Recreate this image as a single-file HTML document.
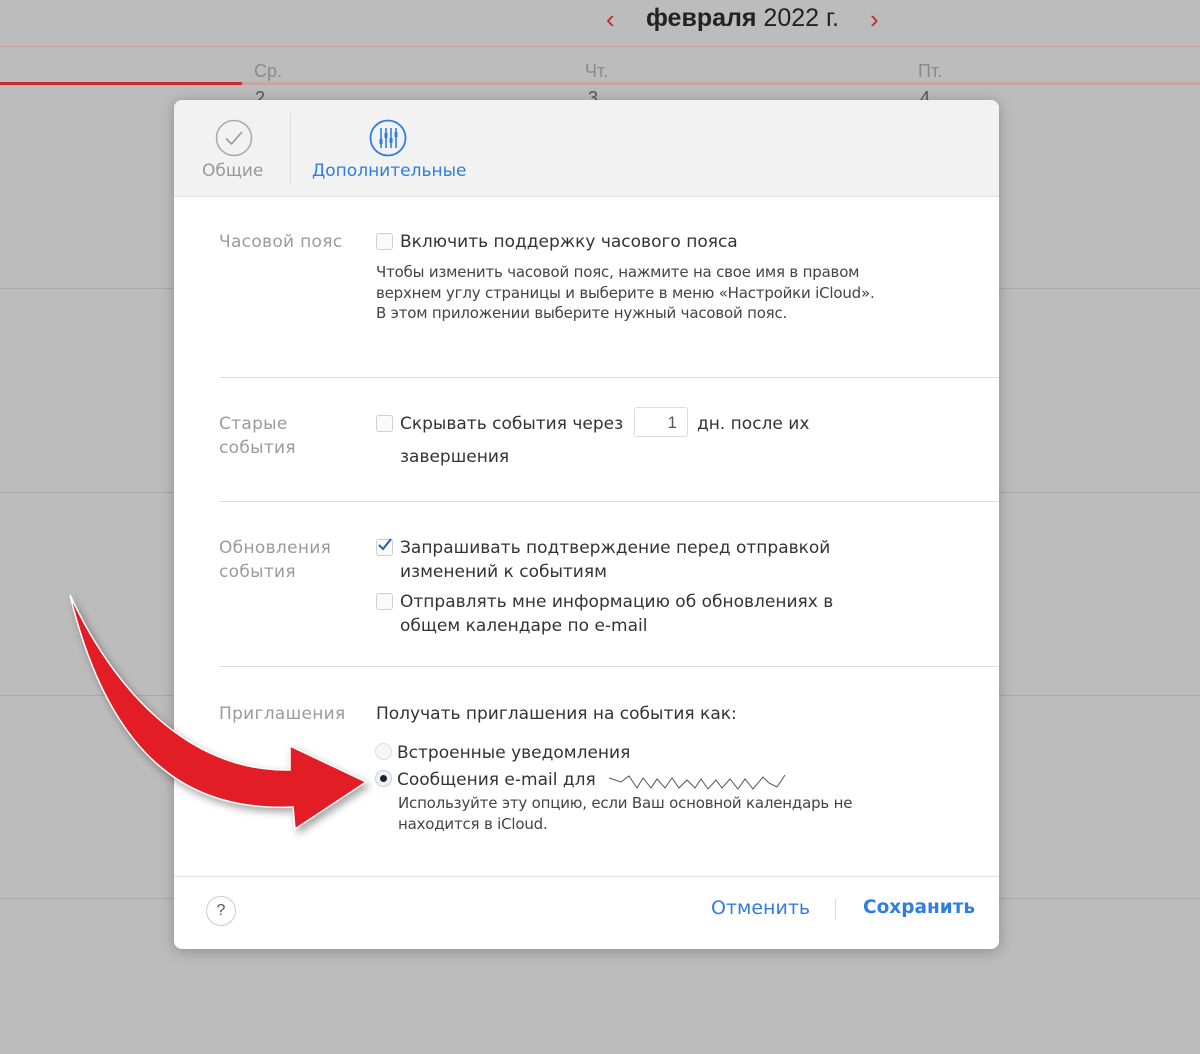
<!DOCTYPE html>
<html><head><meta charset="utf-8"><style>
body{margin:0;width:1200px;height:1054px;background:#bcbcbc;position:relative;overflow:hidden;font-family:"Liberation Sans","DejaVu Sans",sans-serif}
.a{position:absolute;white-space:nowrap}
.d{font-family:"DejaVu Sans",sans-serif}
.hl{position:absolute;left:0;width:1200px;height:1px;background:#a9a9a9}
.modal{position:absolute;left:174px;top:100px;width:825px;height:849px;background:#fff;border-radius:8px;box-shadow:0 2px 14px rgba(0,0,0,.25);overflow:hidden}
.lab{color:#9a9a9a;font-size:17px;line-height:24px;font-family:"DejaVu Sans",sans-serif;letter-spacing:0.3px}
.t{color:#333;font-size:17px;line-height:24px;font-family:"DejaVu Sans",sans-serif;letter-spacing:0px}
.s{color:#444;font-size:15px;line-height:20.5px;font-family:"DejaVu Sans",sans-serif;letter-spacing:-0.2px}
.cb{position:absolute;width:15px;height:15px;border:1px solid #cfcfcf;border-radius:3px;background:#fafafa}
.sep{position:absolute;left:45px;right:0;height:1px;background:#dcdcdc}
</style></head><body>
<div class="a" style="left:606px;top:4px;color:#c8282a;font-size:26px">‹</div>
<div class="a" style="left:646px;top:4px;font-size:25px;color:#222"><b>февраля</b> 2022 г.</div>
<div class="a" style="left:870px;top:4px;color:#c8282a;font-size:26px">›</div>
<div class="hl" style="top:46px;background:#c99a9a"></div>
<div class="a" style="left:254px;top:61px;font-size:18px;color:#8a8a8a">Ср.</div>
<div class="a" style="left:585px;top:61px;font-size:18px;color:#8a8a8a">Чт.</div>
<div class="a" style="left:918px;top:61px;font-size:18px;color:#8a8a8a">Пт.</div>
<div class="hl" style="top:82px;height:3px;background:#c9a3a3"></div>
<div class="a" style="left:0;top:82px;width:242px;height:3px;background:#cc2a2c"></div>
<div class="a" style="left:255px;top:88px;font-size:18px;color:#555">2</div>
<div class="a" style="left:588px;top:88px;font-size:18px;color:#555">3</div>
<div class="a" style="left:920px;top:88px;font-size:18px;color:#555">4</div>
<div class="hl" style="top:288px"></div><div class="hl" style="top:492px"></div><div class="hl" style="top:695px"></div><div class="hl" style="top:898px"></div>

<div class="modal">
 <div style="position:absolute;left:0;top:0;width:825px;height:96px;background:#f2f2f2;border-bottom:1px solid #e0e0e0"></div>
 <svg class="a" style="left:41px;top:19px" width="38" height="38"><circle cx="19" cy="19" r="17.5" fill="none" stroke="#a8a8a8" stroke-width="1.5"/><path d="M11 19.5l5.5 5.5L27 13" fill="none" stroke="#999" stroke-width="1.6"/></svg>
 <div class="a d" style="left:28px;top:61px;font-size:17px;color:#999">Общие</div>
 <div class="a" style="left:116px;top:14px;width:1px;height:70px;background:#ddd"></div>
 <svg class="a" style="left:195px;top:19px" width="38" height="38"><circle cx="19" cy="19" r="17.5" fill="none" stroke="#2f7de1" stroke-width="1.8"/><g stroke="#2f7de1" stroke-width="1.6"><path d="M12 9v20M17 9v20M22 9v20M27 9v20"/></g><g fill="#2f7de1"><rect x="10.5" y="20" width="3" height="5"/><rect x="15.5" y="14" width="3" height="5"/><rect x="20.5" y="19" width="3" height="5"/><rect x="25.5" y="13" width="3" height="5"/></g></svg>
 <div class="a d" style="left:138px;top:61px;font-size:17px;color:#2f7de1">Дополнительные</div>

 <div class="a lab" style="left:45px;top:130px">Часовой пояс</div>
 <div class="cb" style="left:202px;top:133px"></div>
 <div class="a t" style="left:226px;top:130px">Включить поддержку часового пояса</div>
 <div class="a s" style="left:202px;top:162px">Чтобы изменить часовой пояс, нажмите на свое имя в правом<br>верхнем углу страницы и выберите в меню «Настройки iCloud».<br>В этом приложении выберите нужный часовой пояс.</div>
 <div class="sep" style="top:277px"></div>

 <div class="a lab" style="left:45px;top:312px">Старые<br>события</div>
 <div class="cb" style="left:202px;top:315px"></div>
 <div class="a t" style="left:226px;top:312px">Скрывать события через</div>
 <div class="a" style="left:460px;top:307px;width:54px;height:30px;border:1px solid #ddd;border-radius:3px;font-size:17px;color:#555;text-align:right;line-height:30px;box-sizing:border-box;padding-right:10px">1</div>
 <div class="a t" style="left:523px;top:312px">дн. после их</div>
 <div class="a t" style="left:226px;top:345px">завершения</div>
 <div class="sep" style="top:401px"></div>

 <div class="a lab" style="left:45px;top:436px">Обновления<br>события</div>
 <div class="cb" style="left:202px;top:439px"></div>
 <svg class="a" style="left:203px;top:437px" width="16" height="16"><path d="M2 8l4 4 8-10" fill="none" stroke="#1f5fb8" stroke-width="2"/></svg>
 <div class="a t" style="left:226px;top:436px">Запрашивать подтверждение перед отправкой<br>изменений к событиям</div>
 <div class="cb" style="left:202px;top:493px"></div>
 <div class="a t" style="left:226px;top:490px">Отправлять мне информацию об обновлениях в<br>общем календаре по e-mail</div>
 <div class="sep" style="top:566px"></div>

 <div class="a lab" style="left:45px;top:602px">Приглашения</div>
 <div class="a t" style="left:202px;top:602px">Получать приглашения на события как:</div>
 <div class="a" style="left:201px;top:643px;width:15px;height:15px;border:1px solid #ddd;border-radius:50%;background:#f7f7f7"></div>
 <div class="a t" style="left:223px;top:641px">Встроенные уведомления</div>
 <div class="a" style="left:201px;top:670px;width:15px;height:15px;border:1px solid #bcd0ec;border-radius:50%;background:#eef3fa"></div>
 <div class="a" style="left:206px;top:675px;width:7px;height:7px;border-radius:50%;background:#222"></div>
 <div class="a t" style="left:223px;top:668px">Сообщения e-mail для</div>
 <svg class="a" style="left:430px;top:670px" width="210" height="20"><path d="M5 8l12 4 8-6 8 12 6-10 8 10 6-9 8 9 7-10 7 10 8-8 8 8 6-9 7 10 8-9 6 8 8-9 8 10 7-10 8 10 10-12 6 6 8 4 8-12" fill="none" stroke="#555" stroke-width="1"/></svg>
 <div class="a s" style="left:224px;top:693px">Используйте эту опцию, если Ваш основной календарь не<br>находится в iCloud.</div>

 <div class="a" style="left:0;top:776px;width:825px;height:1px;background:#e2e2e2"></div>
 <div class="a" style="left:32px;top:796px;width:28px;height:28px;border:1px solid #ccc;border-radius:50%;text-align:center;line-height:28px;font-size:16px;color:#555">?</div>
 <div class="a d" style="left:537px;top:797px;font-size:19px;color:#2f7de1">Отменить</div>
 <div class="a" style="left:661px;top:798px;width:1px;height:22px;background:#ddd"></div>
 <div class="a d" style="left:689px;top:797px;font-size:18.5px;color:#2f7de1;font-weight:bold">Сохранить</div>
</div>

<svg class="a" style="left:0;top:0;filter:drop-shadow(3px 4px 4px rgba(0,0,0,.35))" width="1200" height="1054"><path d="M70,595 C112,685 185,772 290,770 L290,746 L366,782 L295,829 L293,807 C190,812 110,760 70,595 Z" fill="#e31d26" stroke="#fff" stroke-width="1.5"/></svg>
</body></html>
